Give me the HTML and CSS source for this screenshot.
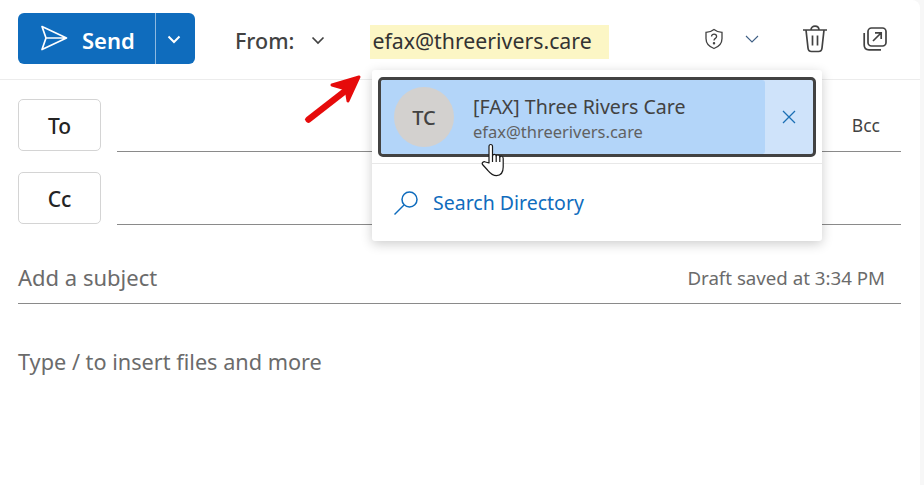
FILE: index.html
```html
<!DOCTYPE html>
<html lang="en">
<head>
    <meta charset="UTF-8">
    <meta name="viewport" content="width=device-width, initial-scale=1.0">
    <title>New message</title>
    <link rel="stylesheet" href="styles.css">
</head>
<body>
    <div class="compose">
        <div class="toolbar">
            <div class="send">
                <button class="send-main">
                    <svg class="send-icon" width="28" height="26" viewBox="0 0 28 26" fill="none" stroke="#fff" stroke-width="1.7" stroke-linejoin="round"><path d="M2 1.5 L26.5 13 L2 24.5 L6 13 Z M6 13 H26.5"/></svg>
                    <span class="send-label">Send</span>
                </button>
                <button class="send-more">
                    <svg width="14" height="9" viewBox="0 0 14 9" fill="none" stroke="#fff" stroke-width="2"><path d="M1.5 1.5 L7 7 L12.5 1.5"/></svg>
                </button>
            </div>
            <div class="from">
                From:
                <svg width="14" height="9" viewBox="0 0 14 9" fill="none" stroke="#424242" stroke-width="1.7"><path d="M1.5 1.5 L7 7 L12.5 1.5"/></svg>
            </div>
            <div class="from-addr">efax@threerivers.care</div>
            <div class="tools">
                <svg class="shield" width="20" height="22" viewBox="0 0 20 22" fill="none" stroke="#424242" stroke-width="1.3"><path d="M10 1.5 C12.5 3.5 15 4.2 18 4.4 V10.5 C18 15.5 14.5 18.8 10 20.5 C5.5 18.8 2 15.5 2 10.5 V4.4 C5 4.2 7.5 3.5 10 1.5 Z"/><path d="M7.5 8.5 C7.5 5.4 12.6 5.4 12.6 8.5 C12.6 10.4 10 10.4 10 12.6"/><circle cx="10" cy="15.3" r=".6"/></svg>
                <svg class="chev" width="14" height="8" viewBox="0 0 14 8" fill="none" stroke="#3f5f85" stroke-width="1.1"><path d="M1 1 L7 7 L13 1"/></svg>
                <svg class="trash" width="26" height="28" viewBox="0 0 26 28" fill="none" stroke="#424242" stroke-width="1.7"><path d="M1 5 H25 M9 5 C9 -0.2 17 -0.2 17 5 M4 5 L6 23 C6.2 25.4 7.6 26.5 9.5 26.5 H16.5 C18.4 26.5 19.8 25.4 20 23 L22 5 M10.5 10.5 V20.5 M15.5 10.5 V20.5"/></svg>
                <svg class="popout" width="24" height="24" viewBox="0 0 24 24" fill="none" stroke="#424242" stroke-width="1.7"><rect x="5" y="1" width="18" height="18" rx="3.5"/><path d="M1.2 6 V18 C1.2 21 3 22.8 6 22.8 H18"/><path d="M10 14 L18 6 M12 5.8 H18.2 V12"/></svg>
            </div>
        </div>

        <div class="recipient">
            <button class="field-btn">To</button>
            <div class="field-line"><span class="bcc">Bcc</span></div>
        </div>
        <div class="recipient">
            <button class="field-btn">Cc</button>
            <div class="field-line"></div>
        </div>

        <div class="subject">
            <span class="subject-text">Add a subject</span>
            <span class="draft">Draft saved at 3:34 PM</span>
        </div>
        <div class="body-text">Type / to insert files and more</div>

        <!-- suggestion popup -->
        <div class="popup">
            <div class="suggestion">
                <div class="person">
                    <div class="avatar">TC</div>
                    <div class="person-text">
                        <div class="person-name">[FAX] Three Rivers Care</div>
                        <div class="person-mail">efax@threerivers.care</div>
                    </div>
                </div>
                <div class="remove">
                    <svg width="14" height="14" viewBox="0 0 14 14" fill="none" stroke="#1c6fb4" stroke-width="1.3"><path d="M1 1 L13 13 M13 1 L1 13"/></svg>
                </div>
            </div>
            <div class="search-row">
                <svg width="26" height="26" viewBox="0 0 26 26" fill="none" stroke="#0f6cbd" stroke-width="1.5"><circle cx="16.5" cy="9.5" r="7.5"/><path d="M11 15 L1.5 24.5"/></svg>
                <span>Search Directory</span>
            </div>
        </div>

        <svg class="arrow" width="60" height="50" viewBox="0 0 60 50" fill="#e60b0b" stroke="#e60b0b" stroke-linecap="round" stroke-linejoin="round"><path d="M4.5 44.5 L45 13" fill="none" stroke-width="6.5"/><path d="M28 10 L55 2 L44 26 L42 14 Z" stroke-width="3"/></svg>

        <svg class="hand" width="26" height="34" viewBox="0 0 26 34" fill="#fff" stroke="#1a1a1a" stroke-width="1.2" stroke-linejoin="round"><path d="M8 20 V3.5 C8 0.8 11.5 0.8 11.5 3.5 V13 C12 10.8 15 10.8 15.2 13.2 C15.8 11.4 18.6 11.6 18.8 14 C19.6 12.6 22.2 13 22.2 15.4 V24 C22.2 29 20 32.6 15.5 32.6 C11 32.6 9 30 6.5 27 L1.5 21.5 C0.5 20 2.5 18 4.5 19 Z"/><path d="M11.5 13 V19 M15.2 13.2 V19 M18.8 14 V19" fill="none"/></svg>
    </div>
</body>
</html>
```

FILE: styles.css
```css
* {
    box-sizing: border-box;
}
body {
    margin: 0;
    background: #f7f7f7;
    color: #424242;
    font-family: "Noto Sans", "Open Sans", sans-serif;
    overflow: hidden;
}
button {
    font-family: inherit;
    cursor: pointer;
}
.compose {
    position: relative;
    width: 920px;
    height: 485px;
    background: #fff;
    border-top-right-radius: 8px;
}
.toolbar {
    display: flex;
    align-items: center;
    height: 80px;
    padding: 13px 33px 16px 18px;
    border-bottom: 1px solid #ececec;
}
.send {
    display: flex;
    width: 177px;
    height: 51px;
    background: #0f6cbd;
    border-radius: 6px;
}
.send-main {
    display: flex;
    align-items: center;
    gap: 14px;
    width: 138px;
    padding: 0 0 0 22px;
    border: 0;
    border-right: 1px solid #8db9e0;
    background: none;
    color: #fff;
    font-size: 22px;
    font-weight: 600;
}
.send-label {
    margin-top: 3px;
}
.send-more {
    display: flex;
    align-items: center;
    justify-content: center;
    flex: 1;
    padding: 3px 4px 0 0;
    border: 0;
    background: none;
}
.from {
    display: flex;
    align-items: center;
    gap: 17px;
    margin: 5px 0 0 40px;
    font-size: 21.5px;
    font-weight: 500;
}
.from-addr {
    width: 239px;
    height: 34px;
    margin: 8px 0 0 45px;
    padding-left: 2px;
    background: #fcf6c5;
    font-size: 21.3px;
    line-height: 32px;
    color: #333;
}
.tools {
    display: flex;
    align-items: center;
    margin: 2px 0 0 auto;
}
.chev {
    margin-left: 21px;
}
.trash {
    margin-left: 43px;
}
.popout {
    margin-left: 35px;
}
.recipient {
    display: flex;
    align-items: flex-end;
    gap: 16px;
    height: 53px;
    margin: 19px 19px 0 18px;
}
.recipient + .recipient {
    margin-top: 20px;
}
.field-btn {
    width: 83px;
    height: 52px;
    margin-bottom: 1px;
    padding-top: 3px;
    border: 1px solid #d4d4d4;
    border-radius: 5px;
    background: #fff;
    color: #242424;
    font-size: 21px;
    font-weight: 500;
}
.field-line {
    display: flex;
    justify-content: flex-end;
    align-items: center;
    flex: 1;
    height: 53px;
    border-bottom: 1px solid #8a8a8a;
}
.bcc {
    margin-right: 21px;
    font-size: 17.5px;
}
.subject {
    display: flex;
    justify-content: space-between;
    align-items: center;
    height: 55px;
    margin: 24px 19px 0 18px;
    padding: 2px 16px 0 0;
    border-bottom: 1px solid #8a8a8a;
    color: #6b6b6b;
}
.subject-text {
    font-size: 22px;
}
.draft {
    font-size: 18.7px;
}
.body-text {
    margin: 43px 0 0 18px;
    font-size: 21.7px;
    color: #6b6b6b;
}
.popup {
    position: absolute;
    top: 70px;
    left: 372px;
    width: 450px;
    height: 171px;
    padding-top: 7px;
    background: #fff;
    border-radius: 3px;
    box-shadow: 0 3px 12px rgba(0, 0, 0, .2);
}
.suggestion {
    display: flex;
    height: 80px;
    margin: 0 6px;
    border: 3px solid #424242;
    border-radius: 5px;
    background: #cfe3fa;
}
.person {
    display: flex;
    align-items: center;
    flex: 1;
    padding-left: 13px;
    background: #b3d5f9;
    border-radius: 3px;
}
.avatar {
    display: flex;
    align-items: center;
    justify-content: center;
    width: 60px;
    height: 60px;
    border-radius: 50%;
    background: #d3d1cf;
    font-size: 20px;
    font-weight: 500;
}
.person-text {
    margin-left: 19px;
}
.person-name {
    padding-top: 1px;
    font-size: 19.6px;
    line-height: 28px;
}
.person-mail {
    font-size: 16.5px;
    line-height: 22px;
    color: #616161;
}
.remove {
    display: flex;
    align-items: center;
    justify-content: center;
    width: 48px;
}
.search-row {
    display: flex;
    align-items: center;
    gap: 14px;
    height: 78px;
    margin-top: 6px;
    padding-left: 21px;
    border-top: 1px solid #e8e8e8;
    color: #0f6cbd;
    font-size: 19.5px;
}
.arrow {
    position: absolute;
    top: 75px;
    left: 304px;
}
.hand {
    position: absolute;
    top: 143px;
    left: 481px;
}
```
